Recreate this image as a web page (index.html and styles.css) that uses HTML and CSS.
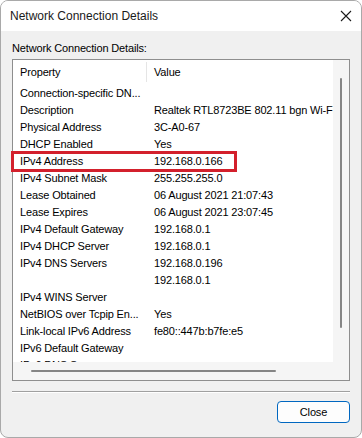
FILE: index.html
```html
<!DOCTYPE html>
<html lang="en">
<head>
    <meta charset="UTF-8">
    <meta name="viewport" content="width=device-width, initial-scale=1.0">
    <title>Network Connection Details</title>
    <link rel="stylesheet" href="styles.css">
</head>
<body>
    <div class="window">
        <div class="titlebar">
            <span class="title">Network Connection Details</span>
            <svg class="close-icon" width="12" height="12" viewBox="0 0 12 12">
                <path d="M1 1 L11 11 M11 1 L1 11" stroke="#1b1b1b" stroke-width="1.1" fill="none"/>
            </svg>
        </div>

        <div class="content">
            <div class="group-label">Network Connection Details:</div>

            <div class="listview">
                <div class="list-area">
                    <div class="list-header">
                        <div class="col-prop">Property</div>
                        <div class="col-value">Value</div>
                    </div>
                    <div class="list-rows">
                        <div class="row"><div class="col-prop">Connection-specific DN...</div><div class="col-value"></div></div>
                        <div class="row"><div class="col-prop">Description</div><div class="col-value">Realtek RTL8723BE 802.11 bgn Wi-Fi Adapter</div></div>
                        <div class="row"><div class="col-prop">Physical Address</div><div class="col-value">3C-A0-67</div></div>
                        <div class="row"><div class="col-prop">DHCP Enabled</div><div class="col-value">Yes</div></div>
                        <div class="row"><div class="col-prop">IPv4 Address</div><div class="col-value">192.168.0.166</div></div>
                        <div class="row"><div class="col-prop">IPv4 Subnet Mask</div><div class="col-value">255.255.255.0</div></div>
                        <div class="row"><div class="col-prop">Lease Obtained</div><div class="col-value">06 August 2021 21:07:43</div></div>
                        <div class="row"><div class="col-prop">Lease Expires</div><div class="col-value">06 August 2021 23:07:45</div></div>
                        <div class="row"><div class="col-prop">IPv4 Default Gateway</div><div class="col-value">192.168.0.1</div></div>
                        <div class="row"><div class="col-prop">IPv4 DHCP Server</div><div class="col-value">192.168.0.1</div></div>
                        <div class="row"><div class="col-prop">IPv4 DNS Servers</div><div class="col-value">192.168.0.196</div></div>
                        <div class="row"><div class="col-prop"></div><div class="col-value">192.168.0.1</div></div>
                        <div class="row"><div class="col-prop">IPv4 WINS Server</div><div class="col-value"></div></div>
                        <div class="row"><div class="col-prop">NetBIOS over Tcpip En...</div><div class="col-value">Yes</div></div>
                        <div class="row"><div class="col-prop">Link-local IPv6 Address</div><div class="col-value">fe80::447b:b7fe:e5</div></div>
                        <div class="row"><div class="col-prop">IPv6 Default Gateway</div><div class="col-value"></div></div>
                        <div class="row"><div class="col-prop">IPv6 DNS Server</div><div class="col-value"></div></div>
                    </div>
                </div>
                <div class="vscroll"><div class="vthumb"></div></div>
                <div class="hscroll"><div class="hthumb"></div></div>
                <div class="scroll-corner"></div>

                <!-- highlight drawn over the IPv4 Address row -->
                <div class="highlight"></div>
            </div>

            <div class="separator"></div>

            <div class="buttons">
                <button type="button" class="btn">Close</button>
            </div>
        </div>
    </div>
</body>
</html>
```
FILE: styles.css
```css
body {
    margin: 0;
    background-color: #ffffff;
    font-family: "Liberation Sans", Arial, sans-serif;
    color: #000;
}
.window {
    width: 362px;
    height: 438px;
    box-sizing: border-box;
    border: 1px solid #a9a9a9;
    border-radius: 8px;
    overflow: hidden;
    background-color: #f0f0f0;
    display: flex;
    flex-direction: column;
}
.titlebar {
    height: 30px;
    flex: none;
    background-color: #ffffff;
    display: flex;
    align-items: center;
    justify-content: space-between;
    padding: 0 9px 0 9px;
}
.title {
    font-size: 12px;
    color: #1a1a1a;
}
.close-icon {
    display: block;
    margin-top: -1px;
}
.content {
    padding: 10px 11px 0 11px;
    font-size: 11px;
    letter-spacing: -0.15px;
}
.group-label {
    height: 14px;
    line-height: 14px;
    margin-bottom: 4px;
}
.listview {
    position: relative;
    height: 322px;
    box-sizing: border-box;
    border: 1px solid #8e8e8e;
    display: grid;
    grid-template-columns: 1fr 16px;
    grid-template-rows: 1fr 18px;
    background-color: #f5f5f5;
}
.list-area {
    background-color: #ffffff;
    overflow: hidden;
    white-space: nowrap;
}
.list-header {
    display: flex;
    height: 25px;
    align-items: stretch;
}
.list-header .col-prop {
    border-right: 1px solid #e5e5e5;
    margin-top: 2px;
    margin-bottom: 3px;
    line-height: 20px;
}
.list-header .col-value {
    line-height: 25px;
}
.col-prop {
    width: 134px;
    flex: none;
    padding-left: 7px;
    box-sizing: border-box;
}
.col-value {
    padding-left: 7px;
}
.row {
    display: flex;
    height: 17px;
    line-height: 17px;
}
.vscroll {
    padding: 18px 0 0 7px;
}
.vthumb {
    width: 2px;
    height: 250px;
    border-radius: 1px;
    background-color: #858585;
}
.hscroll {
    padding: 8px 0 0 18px;
}
.hthumb {
    width: 245px;
    height: 2px;
    border-radius: 1px;
    background-color: #858585;
}
.highlight {
    position: absolute;
    left: -2px;
    top: 91px;
    width: 226px;
    height: 21px;
    box-sizing: border-box;
    border: 3px solid #d3202c;
}
.separator {
    margin-top: 10px;
    border-top: 1px solid #a0a0a0;
    border-bottom: 1px solid #ffffff;
}
.buttons {
    display: flex;
    justify-content: flex-end;
    padding-top: 8px;
}
.btn {
    width: 73px;
    height: 22px;
    box-sizing: border-box;
    border: 1px solid #0067c0;
    border-radius: 4px;
    background-color: #fdfdfd;
    font-family: "Liberation Sans", Arial, sans-serif;
    font-size: 11px;
    letter-spacing: -0.15px;
    color: #000;
    padding: 0;
    cursor: pointer;
}
```
